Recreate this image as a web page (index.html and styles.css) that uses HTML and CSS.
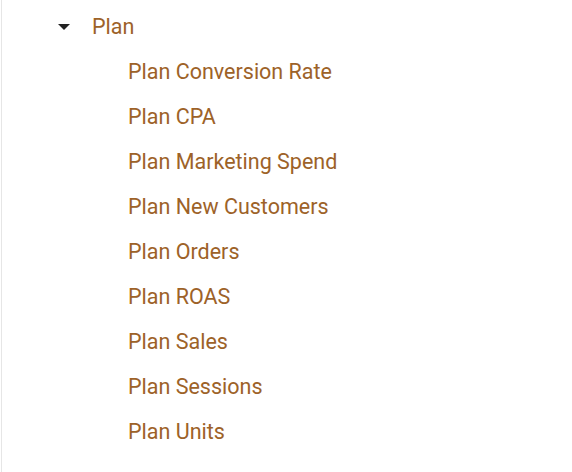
FILE: index.html
```html
<!DOCTYPE html>
<html>
<head>
<meta charset="utf-8">
<link rel="stylesheet" href="styles.css">
</head>
<body>
<div class="panel">
  <div class="group">
    <div class="group-head">
      <span class="caret"></span>
      <span class="label">Plan</span>
    </div>
    <ul class="items">
      <li>Plan Conversion Rate</li>
      <li>Plan CPA</li>
      <li>Plan Marketing Spend</li>
      <li>Plan New Customers</li>
      <li>Plan Orders</li>
      <li>Plan ROAS</li>
      <li>Plan Sales</li>
      <li>Plan Sessions</li>
      <li>Plan Units</li>
    </ul>
  </div>
</div>
</body>
</html>
```

FILE: styles.css
```css
html, body {
  margin: 0;
  padding: 0;
  background: #fff;
}
body {
  font-family: Roboto, "Liberation Sans", sans-serif;
  width: 572px;
  height: 472px;
  overflow: hidden;
}
.panel {
  margin-left: 1px;
  border-left: 1px solid #e6e6e6;
  height: 472px;
  box-sizing: border-box;
}
.group-head {
  display: flex;
  align-items: center;
  height: 30px;
  padding-top: 11px;
  padding-left: 56px;
}
.caret {
  width: 0;
  height: 0;
  border-left: 6px solid transparent;
  border-right: 6px solid transparent;
  border-top: 6px solid #222;
  margin-right: 22px;
  margin-top: 1px;
}
.label, .items li {
  color: #9d6228;
  font-size: 21.5px;
}
.items {
  list-style: none;
  margin: 0;
  padding: 8px 0 0 126px;
  display: flex;
  flex-direction: column;
}
.items li {
  height: 45px;
  line-height: 45px;
}
```
